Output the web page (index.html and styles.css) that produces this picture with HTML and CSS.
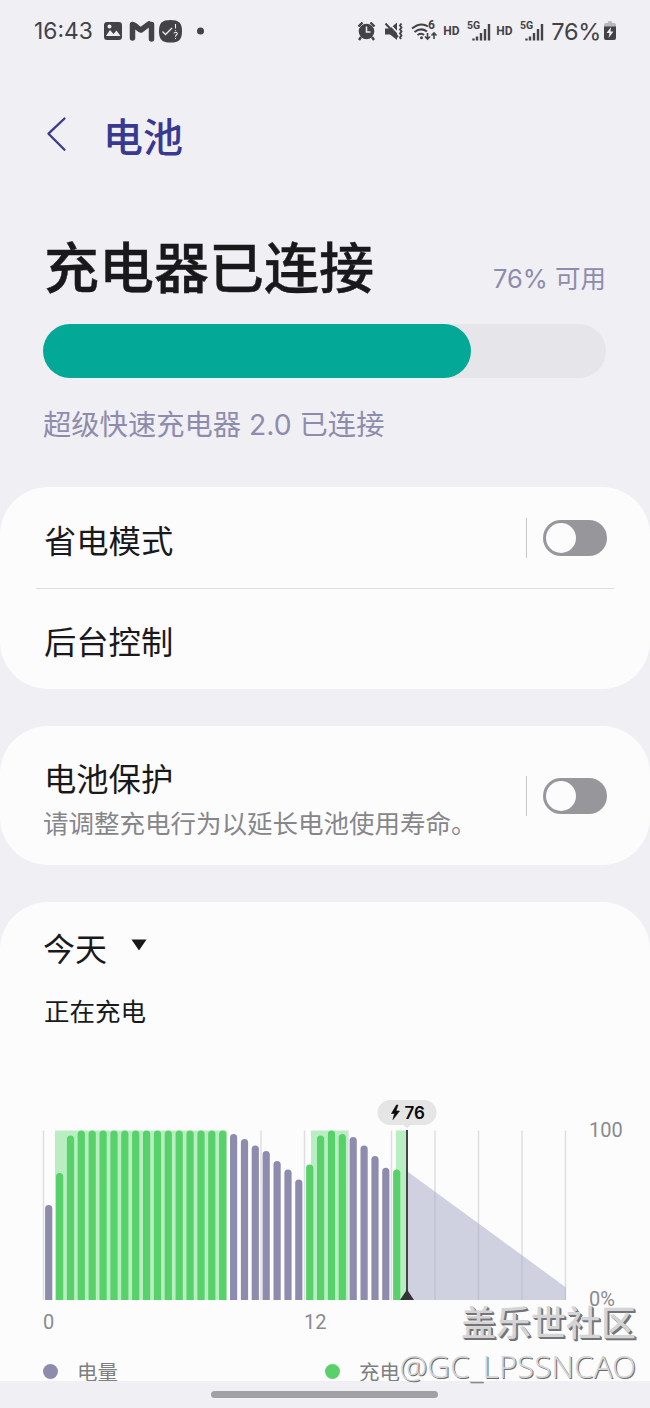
FILE: index.html
```html
<!DOCTYPE html>
<html lang="zh-CN">
<head>
    <meta charset="UTF-8">
    <title>电池</title>
    <link rel="stylesheet" href="styles.css">
</head>
<body>
<div class="status-bar">
    <span class="clock">16:43</span>
    <svg class="status-left" width="110" height="30" viewBox="0 0 110 30">
        <rect x="5" y="6" width="18" height="18" rx="3" fill="#434347"/>
        <path d="M7 20l4-6 3.500 4 3-3.500 4 5.500z" fill="#f0eff4"/>
        <circle cx="10.500" cy="10.500" r="2" fill="#f0eff4"/>
        <path d="M33.500 22V8.500c3 0 5.500 5 8.500 5.500l8-6" fill="none" stroke="#434347" stroke-width="5.500" stroke-linecap="round" stroke-linejoin="round"/>
        <path d="M52.500 8.500V23" fill="none" stroke="#434347" stroke-width="5.500" stroke-linecap="round"/>
        <path d="M71.500 4C80 4 83 7 83 15.200S80 26.500 71.500 26.500 60 23.400 60 15.200 63 4 71.500 4z" fill="#434347"/>
        <path d="M63.500 15.500l3 3 6.500-6.500" fill="none" stroke="#f0eff4" stroke-width="1.300"/>
        <path d="M76.500 8v4.500M76.500 14v.8M75 17.500c.4-2 3.600-1.500 3.200.4-.2 1-1.700 1.200-1.700 2.800M76.500 22v1" fill="none" stroke="#f0eff4" stroke-width="1.100"/>
        <circle cx="101.500" cy="15" r="3.500" fill="#434347"/>
    </svg>
    <div class="status-right">
        <svg width="82" height="30" viewBox="0 0 82 30">
            <g fill="none" stroke="#434347">
                <circle cx="9.500" cy="15.500" r="7.800" fill="#434347" stroke="none"/>
                <path d="M1.500 10.500l4-4M17.500 10.500l-4-4M4 21l-2 3M15 21l2 3" stroke-width="2.400"/>
                <path d="M9.500 10.500v5.500h4" stroke="#f0eff4" stroke-width="1.500"/>
                <path d="M28 12.500h5l7-6v17.500l-7-5.500h-5z" fill="#434347" stroke="none"/>
                <path d="M30.500 6L42 18" stroke="#f0eff4" stroke-width="1.800"/>
                <path d="M28.500 7.500L41 21" stroke-width="2"/>
                <path d="M44.500 7.500l-1.500 2 1.500 2-1.500 2 1.500 2-1.500 2 1.500 2-1.500 2 1 1.500" stroke-width="1.900"/>
                <path d="M55 12.500q8.500-7 16-2M57.500 16q6.500-5 12.500-.5M60.500 19q4-2.600 6.500 0" stroke-width="2"/>
                <path d="M70.500 17v6M68 20.500l2.500 2.500 2.500-2.500M77 23v-6M74.500 19.500L77 17l2.500 2.500" stroke-width="1.600"/>
            </g>
            <circle cx="64.500" cy="21.800" r="1.500" fill="#434347"/>
            <text class="wifi-gen" x="71" y="12.500">6</text>
        </svg>
        <span class="hd">HD</span>
        <svg class="signal" width="24" height="30" viewBox="0 0 24 30">
            <text class="network" x="0" y="13">5G</text>
            <path d="M6.500 22.500v2M10 20.500v4M14 17v7.500M18 13v11.500M22 8v16.500" stroke="#434347" stroke-width="2.400"/>
        </svg>
        <span class="hd hd-second">HD</span>
        <svg class="signal signal-second" width="24" height="30" viewBox="0 0 24 30">
            <text class="network" x="0" y="13">5G</text>
            <path d="M6.500 22.500v2M10 20.500v4M14 17v7.500M18 13v11.500M22 8v16.500" stroke="#434347" stroke-width="2.400"/>
        </svg>
        <span class="percent">76%</span>
        <svg width="14" height="30" viewBox="0 0 14 30">
            <path d="M1 11V9q0-2 2-2h1.500q0-2 2.500-2t2.500 2H11q2 0 2 2v2z" fill="#b9b9bd"/>
            <path d="M1 10.500h12V22q0 2-2 2H3q-2 0-2-2z" fill="#434347"/>
            <path d="M8 11l-4.500 6h3l-1 5 5-6.500h-3z" fill="#f0eff4"/>
        </svg>
    </div>
</div>

<header class="page-header">
    <svg class="back" width="22" height="36" viewBox="0 0 22 36">
        <path d="M19.500 2.500L3.500 17.700l16 16" fill="none" stroke="#383991" stroke-width="2.300" stroke-linecap="round" stroke-linejoin="round"/>
    </svg>
    <h1 class="page-title">电池</h1>
</header>

<section class="summary">
    <div class="summary-head">
        <h2 class="summary-title">充电器已连接</h2>
        <span class="available">76% 可用</span>
    </div>
    <div class="progress">
        <div class="progress-fill" style="width: 76%"></div>
    </div>
    <p class="charger">超级快速充电器 2.0 已连接</p>
</section>

<section class="card">
    <div class="row row-divided">
        <span class="row-title">省电模式</span>
        <span class="toggle-wrap"><span class="toggle"></span></span>
    </div>
    <div class="row row-last">
        <span class="row-title">后台控制</span>
    </div>
</section>

<section class="card">
    <div class="row row-protect">
        <div class="row-body">
            <div class="row-title">电池保护</div>
            <div class="row-text">请调整充电行为以延长电池使用寿命。</div>
        </div>
        <span class="toggle-wrap"><span class="toggle"></span></span>
    </div>
</section>

<section class="card card-usage">
    <div class="day">今天
        <svg width="18" height="12" viewBox="0 0 18 12"><path d="M1.500 .5h15L9 11.500z" fill="#19191b"/></svg>
    </div>
    <p class="state">正在充电</p>
    <div class="chart-wrap">
        <svg class="chart" width="584" height="210" viewBox="0 1090 584 210">
            <!-- charging periods -->
            <path class="charging" d="M55 1130.500h172V1300H55zM311 1130.500h37V1300h-37zM396 1130.500h11V1300h-11z"/>
            <!-- grid, one line every two hours -->
            <path class="grid" d="M43.500 1130.500V1300M261 1130.500V1300M304.500 1130.500V1300M348 1130.500V1300M391.500 1130.500V1300M435 1130.500V1300M478.500 1130.500V1300M522 1130.500V1300M565.500 1130.500V1300"/>
            <path class="forecast" d="M408 1172L566 1287.500V1300H408z"/>
            <path class="bars" d="M48.700 1208.600V1310M233.600 1137.600V1310M244.500 1142.600V1310M255.300 1149.100V1310M266.200 1154.600V1310M277.100 1164.600V1310M288 1173.100V1310M298.800 1183.100V1310M353.200 1140.600V1310M364.100 1149.100V1310M375 1159.600V1310M385.800 1171.400V1310"/>
            <path class="bars bars-charging" d="M59.600 1176.600V1310M70.500 1139.100V1310M81.300 1134.100V1310M92.200 1134.100V1310M103.100 1134.100V1310M114 1134.100V1310M124.800 1134.100V1310M135.700 1134.100V1310M146.600 1134.100V1310M157.500 1134.100V1310M168.300 1134.100V1310M179.200 1134.100V1310M190.100 1134.100V1310M201 1134.100V1310M211.800 1134.100V1310M222.700 1134.100V1310M309.700 1168.100V1310M320.600 1139.100V1310M331.500 1134.100V1310M342.300 1137.600V1310M396.700 1173.100V1310"/>
            <path d="M407 1130V1300" stroke="#444347" stroke-width="2"/>
            <path d="M400 1300l7-10.500 7 10.500z" fill="#343338"/>
            <!-- current level -->
            <path d="M402 1124h10l-5 4z" fill="#e5e5e6"/>
            <rect x="377.500" y="1100" width="59" height="25" rx="12.500" fill="#e5e5e6"/>
            <path d="M396.500 1105l-5 8.500h3l-1.500 6 6.500-8.500h-3.500l2-6z" fill="#09090b" stroke="#09090b" stroke-width=".6"/>
            <text class="level" x="404.500" y="1119">76</text>
        </svg>
        <div class="scale"><span>100</span><span>0%</span></div>
    </div>
    <div class="hours"><span>0</span><span>12</span></div>
    <div class="legend">
        <span class="legend-item"><i class="dot"></i>电量</span>
        <span class="legend-item"><i class="dot dot-charging"></i>充电</span>
    </div>
</section>

<div class="nav-bar"><span class="nav-handle"></span></div>
<div class="watermark">
    <div class="watermark-site">盖乐世社区</div>
    <div class="watermark-user">@GC_LPSSNCAO</div>
</div>
</body>
</html>
```
FILE: styles.css
```css
* {
    box-sizing: border-box;
}

body {
    background: #f0eff4;
    color: #19191b;
    display: flex;
    flex-direction: column;
    font-family: Roboto, "Noto Sans CJK SC", sans-serif;
    height: 1408px;
    margin: 0;
    overflow: hidden;
    position: relative;
    width: 650px;
}

h1, h2, p {
    margin: 0;
}

svg {
    display: block;
    flex: none;
}

.status-bar {
    align-items: center;
    color: #434347;
    display: flex;
    flex: none;
    height: 62px;
    padding: 0 33px 0 34px;
}

.clock {
    font-family: Inter, sans-serif;
    font-size: 22.800px;
    font-weight: 400;
    margin-top: -1px;
    width: 65px;
}

.status-right {
    align-items: center;
    display: flex;
    margin-left: auto;
}

.wifi-gen {
    fill: #434347;
    font-size: 12px;
    font-weight: 700;
}

.hd {
    font-size: 12px;
    font-weight: 700;
    margin-left: 4px;
    width: 24px;
}

.hd-second {
    margin-left: 5px;
}

.signal-second {
    margin: 0 7px 0 0;
}

.network {
    fill: #434347;
    font-size: 10.500px;
    font-weight: 700;
}

.percent {
    font-family: Inter, sans-serif;
    font-size: 23.500px;
    font-weight: 400;
    letter-spacing: -.3px;
    margin-right: 2px;
}

.page-header {
    align-items: center;
    display: flex;
    flex: none;
    height: 148px;
    padding-left: 45px;
}

.back {
    margin: 0 36px 4px 0;
}

.page-title {
    color: #383991;
    font-size: 40px;
    font-weight: 500;
    line-height: 60px;
    padding-top: 5px;
}

.summary {
    flex: none;
    height: 277px;
    padding: 16px 44px 0 43px;
}

.summary-head {
    align-items: flex-end;
    display: flex;
    height: 98px;
    justify-content: space-between;
}

.summary-title {
    font-size: 55px;
    font-weight: 500;
    line-height: 80px;
    padding: 0 0 15px 1px;
    -webkit-text-stroke: .4px #19191b;
}

.available {
    color: #8e8cad;
    font-family: Inter, "Noto Sans CJK SC", sans-serif;
    font-size: 25.500px;
    line-height: 40px;
    padding-bottom: 25px;
}

.progress {
    background: #e6e6ea;
    border-radius: 27px;
    height: 54px;
}

.progress-fill {
    background: #03a996;
    border-radius: 27px;
    height: 54px;
}

.charger {
    color: #8e8cad;
    font-family: Inter, "Noto Sans CJK SC", sans-serif;
    font-size: 28.300px;
    line-height: 42px;
    margin-top: 26px;
}

.card {
    background: #fcfcfd;
    border-radius: 48px;
    flex: none;
    margin-bottom: 37px;
    padding: 0 36px;
}

.row {
    align-items: center;
    display: flex;
    height: 102px;
    justify-content: space-between;
    padding: 0 7px 0 8px;
}

.row-divided {
    border-bottom: 1px solid #dedee0;
    padding-top: 1px;
}

.row-divided .row-title {
    padding-top: 7px;
}

.row-last {
    height: 100px;
    padding-top: 7px;
}

.row-protect {
    height: 139px;
}

.row-body {
    padding-top: 7px;
}

.row-title {
    font-size: 32.300px;
    line-height: 48px;
}

.row-text {
    color: #86868a;
    font-size: 25.500px;
    line-height: 38px;
    margin: 1px 0 -1px -1px;
}

.toggle-wrap {
    border-left: 1px solid #c8c8cb;
    display: flex;
    height: 40px;
    padding: 2px 0 2px 16px;
}

.toggle {
    background: #97969b;
    border-radius: 18px;
    height: 36px;
    padding: 3px;
    width: 64px;
}

.toggle::before {
    background: #fcfcfd;
    border-radius: 50%;
    content: "";
    display: block;
    height: 30px;
    width: 30px;
}

.card-usage {
    border-radius: 48px 48px 0 0;
    height: 479px;
    margin: 0;
    overflow: hidden;
    padding: 0;
}

.day {
    align-items: center;
    display: flex;
    font-size: 32px;
    gap: 23px;
    height: 48px;
    margin: 21px 0 0 43px;
}

.day svg {
    margin-bottom: 5px;
}

.state {
    font-size: 25.500px;
    line-height: 38px;
    margin: 22px 0 0 44px;
}

.chart-wrap {
    display: flex;
    height: 210px;
    margin-top: 59px;
}

.charging {
    fill: #b9eec2;
}

.grid {
    stroke: #dedee0;
    stroke-width: 1.500;
}

.forecast {
    fill: #a1a3c3;
    fill-opacity: .5;
}

.bars {
    stroke: #8e8cad;
    stroke-linecap: round;
    stroke-width: 7.200;
}

.bars-charging {
    stroke: #58d16a;
}

.level {
    fill: #09090b;
    font-family: Inter, sans-serif;
    font-size: 17px;
    font-weight: 600;
}

.scale {
    color: #8a8a8d;
    display: flex;
    flex-direction: column;
    font-size: 20px;
    height: 193px;
    justify-content: space-between;
    line-height: 24px;
    margin: 28px 0 -11px 5px;
}

.hours {
    color: #8a8a8d;
    display: flex;
    font-size: 20px;
    line-height: 24px;
    margin: 10px 0 0 43px;
}

.hours span {
    width: 261px;
}

.legend {
    color: #7f7f82;
    display: flex;
    font-size: 20.500px;
    line-height: 30px;
    margin: 24px 0 0 43px;
}

.legend-item {
    align-items: center;
    display: flex;
    gap: 19px;
    width: 282px;
}

.dot {
    background: #8e8cad;
    border-radius: 50%;
    height: 15px;
    margin-bottom: 3px;
    width: 15px;
}

.dot-charging {
    background: #58d16a;
}

.nav-bar {
    background: #f0eff4;
    flex: none;
    height: 27px;
    padding: 10px 0 0 211px;
}

.nav-handle {
    background: #a1a0a5;
    border-radius: 4px;
    display: block;
    height: 7px;
    width: 227px;
}

/* Stamped over the lower right corner of the page */
.watermark {
    bottom: 20px;
    color: #d4d4d6;
    position: absolute;
    right: 14px;
    text-align: right;
    text-shadow: 1px 1px 0 #747477, 2px 2px 0 #747477;
    white-space: nowrap;
}

.watermark-site {
    font-family: "Noto Sans CJK SC", sans-serif;
    font-size: 35px;
    font-weight: 500;
    line-height: 46px;
}

.watermark-user {
    font-family: "Noto Sans", sans-serif;
    font-size: 31.300px;
    font-weight: 300;
    line-height: 44px;
    text-shadow: 1px 1px 0 #6c6c6f;
}
```
